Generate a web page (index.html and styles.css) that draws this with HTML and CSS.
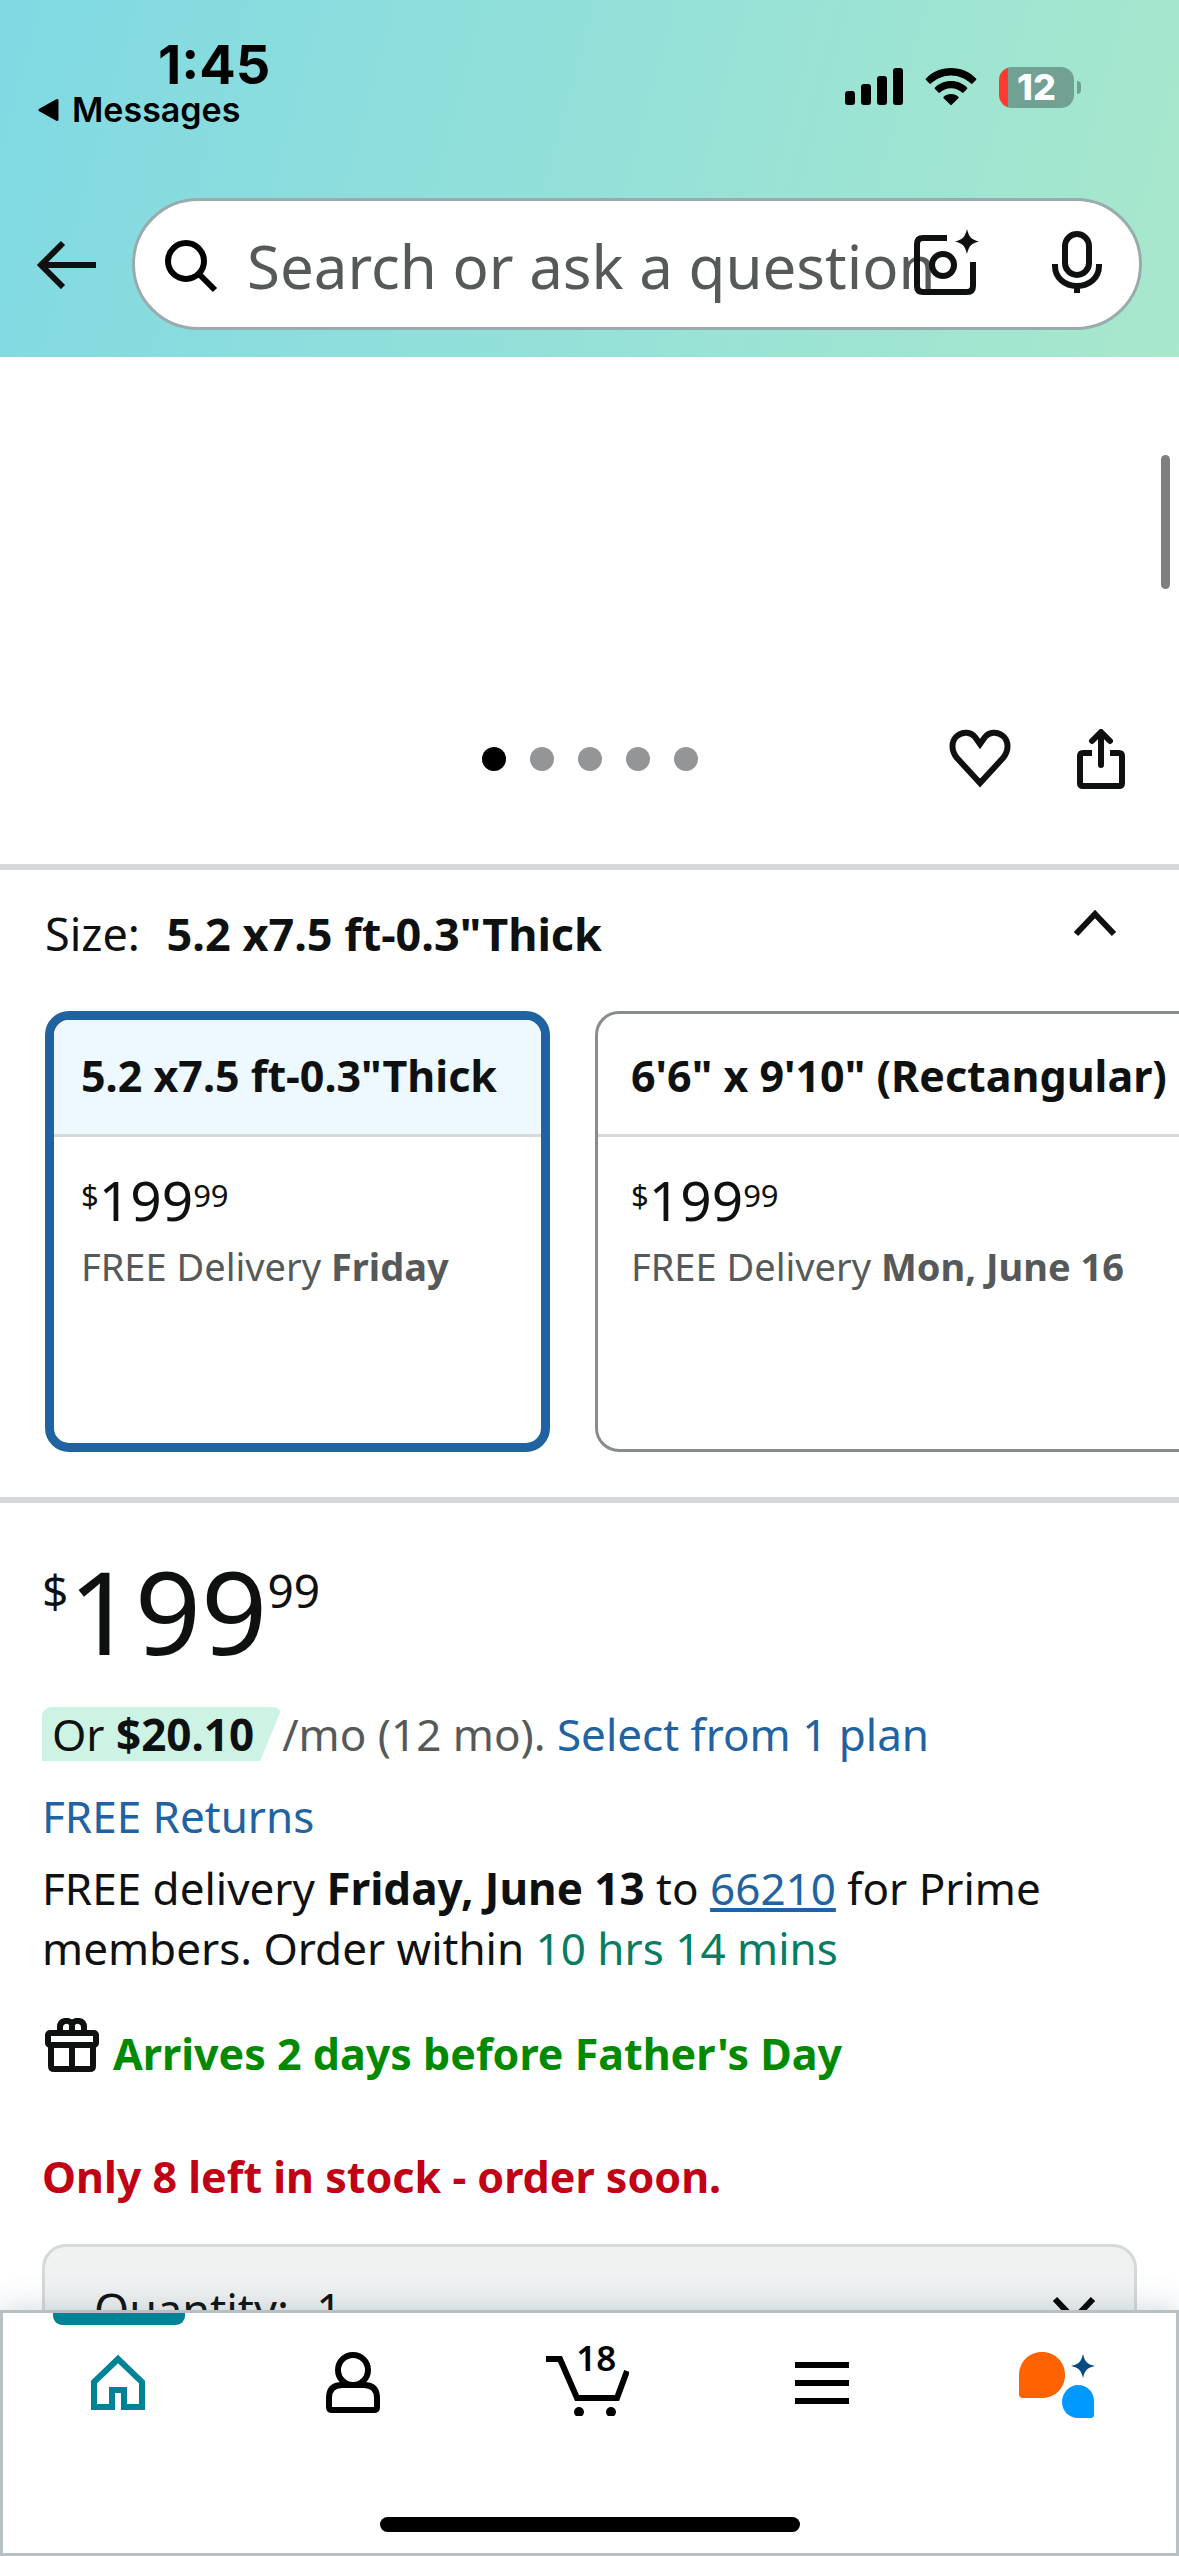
FILE: index.html
```
<!DOCTYPE html>
<html lang="en">
<head>
    <meta charset="UTF-8">
    <meta name="viewport" content="width=device-width, initial-scale=1.0">
    <title>Product</title>
    <link rel="stylesheet" href="styles.css">
</head>
<body>
    <header>
        <div class="status">
            <div class="status-left">
                <div class="time">1:45</div>
                <a class="back-app" href="#">
                    <svg width="22" height="24" viewBox="0 0 22 24"><path d="M19 2.500v19L2 12z" stroke="#000" stroke-width="3" stroke-linejoin="round"/></svg>
                    Messages
                </a>
            </div>
            <div class="status-right">
                <svg width="58" height="38" viewBox="0 0 58 38">
                    <rect x="0" y="23" width="10" height="14" rx="3"/>
                    <rect x="16" y="16" width="10" height="21" rx="3"/>
                    <rect x="32" y="8" width="10" height="29" rx="3"/>
                    <rect x="48" y="0" width="10" height="37" rx="3"/>
                </svg>
                <svg width="52" height="38" viewBox="0 0 52 38">
                    <path d="M26 0C36 0 45 4 51 10.500a1 1 0 0 1 0 1.500l-3.500 3.500a1 1 0 0 1-1.500 0C40.500 10.500 33.500 7.500 26 7.500S11.500 10.500 6 15.500a1 1 0 0 1-1.500 0L1 12a1 1 0 0 1 0-1.500C7 4 16 0 26 0z"/>
                    <path d="M26 13c6.500 0 12 2.500 16 6.500a1 1 0 0 1 0 1.500l-3.500 3.500a1 1 0 0 1-1.500 0c-3-2.500-6.500-4.200-11-4.200s-8 1.700-11 4.200a1 1 0 0 1-1.500 0L10 21a1 1 0 0 1 0-1.500C14 15.500 19.500 13 26 13z"/>
                    <path d="M26 26c3 0 5.500 1 7.300 2.700a1 1 0 0 1 0 1.500L26.700 36.800a1 1 0 0 1-1.400 0L18.700 30.200a1 1 0 0 1 0-1.500C20.500 27 23 26 26 26z"/>
                </svg>
                <div class="battery"><span>12</span></div>
            </div>
        </div>
        <div class="search-row">
            <button class="icon-btn" aria-label="Back">
                <svg width="60" height="50" viewBox="0 0 60 50" fill="none" stroke="#0f1111" stroke-width="6"><path d="M27 4L5 26l22 22M5 26h55"/></svg>
            </button>
            <form class="search">
                <svg class="magnifier" width="54" height="54" viewBox="0 0 54 54" fill="none" stroke="#000" stroke-width="6"><circle cx="22" cy="22" r="18"/><path d="M34.500 34.500L51 51"/></svg>
                <input type="text" placeholder="Search or ask a question" aria-label="Search">
                <div class="search-tools">
                    <button class="icon-btn" type="button" aria-label="Search by photo">
                        <svg width="66" height="66" viewBox="0 0 66 66" fill="none" stroke="#0f1111" stroke-width="6">
                            <path d="M33 9H9Q3 9 3 15v42q0 6 6 6h44q6 0 6-6V33"/>
                            <circle cx="29" cy="36" r="11"/>
                            <path d="M53 0c2 8 4 10.500 12 12.500-8 2-10 4.500-12 12.500-2-8-4-10.500-12-12.500 8-2 10-4.500 12-12.500z" fill="#0f1111" stroke="none"/>
                        </svg>
                    </button>
                    <button class="icon-btn" type="button" aria-label="Voice search">
                        <svg width="50" height="62" viewBox="0 0 50 62" fill="none" stroke="#0f1111" stroke-width="6">
                            <rect x="13" y="3" width="24" height="41" rx="12"/>
                            <path d="M3 33v2c0 12 10 20 22 20s22-8 22-20v-2M25 54v8"/>
                        </svg>
                    </button>
                </div>
            </form>
        </div>
    </header>

    <main>
        <section class="gallery">
            <div class="dots">
                <i class="active"></i><i></i><i></i><i></i><i></i>
            </div>
            <div class="actions">
                <button class="icon-btn" aria-label="Add to list">
                    <svg width="62" height="60" viewBox="0 0 62 60" fill="none" stroke="#0f1111" stroke-width="6"><path d="M31 54L8 29C2 22 2 12 8 7c6-5 14-4 18 1l5 7 5-7c4-5 12-6 18-1 6 5 6 15 0 22z"/></svg>
                </button>
                <button class="icon-btn" aria-label="Share">
                    <svg width="48" height="60" viewBox="0 0 48 60" fill="none" stroke="#0f1111" stroke-width="6">
                        <path d="M15 24H6q-3 0-3 3v27q0 3 3 3h36q3 0 3-3V27q0-3-3-3h-9"/>
                        <path d="M24 36V4M15 12l9-9 9 9" stroke-linecap="round" stroke-linejoin="round"/>
                    </svg>
                </button>
            </div>
            <div class="scrollbar"></div>
        </section>

        <section class="sizes">
            <div class="size-head">
                <p>Size: <b>5.2 x7.5 ft-0.3"Thick</b></p>
                <button class="icon-btn" aria-label="Collapse">
                    <svg width="44" height="28" viewBox="0 0 44 28" fill="none" stroke="#0f1111" stroke-width="6"><path d="M3 25L22 5l19 20"/></svg>
                </button>
            </div>
            <div class="size-list">
                <button class="size-card selected" aria-pressed="true">
                    <span class="size-name">5.2 x7.5 ft-0.3"Thick</span>
                    <span class="size-body">
                        <span class="price"><sup>$</sup>199<sup>99</sup></span>
                        <span>FREE Delivery <b>Friday</b></span>
                    </span>
                </button>
                <button class="size-card" aria-pressed="false">
                    <span class="size-name">6'6" x 9'10" (Rectangular)</span>
                    <span class="size-body">
                        <span class="price"><sup>$</sup>199<sup>99</sup></span>
                        <span>FREE Delivery <b>Mon, June 16</b></span>
                    </span>
                </button>
            </div>
        </section>

        <section class="buy">
            <div class="price big"><sup>$</sup>199<sup>99</sup></div>
            <p class="plan"><span class="badge">Or <b>$20.10</b></span><span>/mo (12 mo). <a href="#">Select from 1 plan</a></span></p>
            <p class="returns"><a href="#">FREE Returns</a></p>
            <p>FREE delivery <b>Friday, June 13</b> to <a class="zip" href="#">66210</a> for Prime members. Order within <span class="countdown">10 hrs 14 mins</span></p>
            <p class="arrives">
                <svg width="54" height="54" viewBox="0 0 54 54" fill="none" stroke="#0f1111" stroke-width="6">
                    <rect x="3" y="15" width="48" height="12" rx="2"/>
                    <path d="M6 27v21q0 3 3 3h36q3 0 3-3V27M27 27v24M15 13V9c0-7 9-8 12-3v7M39 13V9c0-7-9-8-12-3"/>
                </svg>
                <b>Arrives 2 days before Father's Day</b>
            </p>
            <p class="stock"><b>Only 8 left in stock - order soon.</b></p>
            <div class="quantity">
                <label for="qty">Quantity:</label>
                <select id="qty"><option>1</option><option>2</option><option>3</option></select>
                <svg width="44" height="28" viewBox="0 0 44 28" fill="none" stroke="#000" stroke-width="6"><path d="M3 3l19 20L41 3"/></svg>
            </div>
        </section>
    </main>

    <nav>
        <div class="tabs">
            <a class="tab current" href="#" aria-label="Home">
                <svg width="54" height="62" viewBox="0 0 54 62" fill="none" stroke="#008296" stroke-width="6"><path d="M3 55V30L27 7l24 23v25H33V38H21v17z"/></svg>
            </a>
            <a class="tab" href="#" aria-label="Account">
                <svg width="54" height="62" viewBox="0 0 54 62" fill="none" stroke="#000" stroke-width="6">
                    <ellipse cx="27" cy="18" rx="15" ry="15"/>
                    <path d="M16 33h22q13 0 13 13v9q0 3-3 3H6q-3 0-3-3v-9q0-13 13-13z"/>
                </svg>
            </a>
            <a class="tab" href="#" aria-label="Cart">
                <svg width="84" height="64" viewBox="0 0 84 64" fill="none" stroke="#000" stroke-width="6">
                    <path d="M1 7h14l17 39h40l10-27"/>
                    <circle cx="34" cy="60" r="5" fill="#000" stroke="none"/>
                    <circle cx="66" cy="60" r="5" fill="#000" stroke="none"/>
                </svg>
                <span class="count">18</span>
            </a>
            <a class="tab" href="#" aria-label="Menu">
                <svg width="54" height="62" viewBox="0 0 54 62" stroke="#000" stroke-width="6"><path d="M0 13h54M0 31h54M0 49h54"/></svg>
            </a>
            <a class="tab" href="#" aria-label="Assistant">
                <svg width="76" height="66" viewBox="0 0 76 66">
                    <path d="M23 0c13 0 23 10 23 23S36 46 23 46H4q-4 0-4-4V23C0 10 10 0 23 0z" fill="#ff6200"/>
                    <path d="M59 33c9 0 16 7 16 16v14q0 3-3 3H59c-9 0-16-7-16-16s7-17 16-17z" fill="#0099ff"/>
                    <path d="M64 2c2 8 4 10 12 12-8 2-10 4-12 12-2-8-4-10-12-12 8-2 10-4 12-12z" fill="#064a80"/>
                </svg>
            </a>
        </div>
        <div class="home-bar"></div>
    </nav>
</body>
</html>
```
FILE: styles.css
```
* {
    box-sizing: border-box;
}
body {
    margin: 0;
    height: 100vh;
    display: flex;
    flex-direction: column;
    background-color: #fff;
    color: #0f1111;
    font-family: "Noto Sans", "Open Sans", sans-serif;
    font-size: 44px;
    line-height: 60px;
}
p {
    margin: 0;
}
a {
    color: #2162a1;
    text-decoration: none;
}
svg {
    display: block;
    flex: none;
}
button, input, select {
    font: inherit;
    color: inherit;
}
.icon-btn {
    padding: 0;
    border: none;
    background: none;
    cursor: pointer;
}

/* Header */
header {
    flex: none;
    padding-bottom: 27px;
    background: linear-gradient(105deg, #80d9e3, #93e0d9 48%, #a8e8cc);
}
.status {
    display: flex;
    justify-content: space-between;
    height: 198px;
    padding: 36px 105px 0 38px;
    color: #000;
    font-family: Inter, sans-serif;
}
.time {
    padding-left: 120px;
    font-size: 54px;
    font-weight: 700;
    line-height: 58px;
}
.back-app {
    display: flex;
    align-items: center;
    gap: 12px;
    color: #000;
    font-size: 34px;
    font-weight: 600;
    line-height: 32px;
}
.status-right {
    display: flex;
    align-items: center;
    gap: 22px;
    height: 104px;
    margin-top: -1px;
}
.battery {
    position: relative;
    width: 75px;
    height: 41px;
    border-radius: 13px;
    background: linear-gradient(90deg, #ff3b30 9px, #72a092 9px);
    color: #fff;
    font-size: 36px;
    font-weight: 800;
    line-height: 41px;
    text-align: center;
}
.battery::after {
    content: "";
    position: absolute;
    right: -7px;
    top: 14px;
    width: 4px;
    height: 13px;
    border-radius: 0 4px 4px 0;
    background-color: #72a092;
}
.search-row {
    display: flex;
    align-items: center;
    gap: 36px;
    padding: 0 37px 0 36px;
}
.search {
    position: relative;
    flex: 1;
}
.search input {
    display: block;
    width: 100%;
    height: 132px;
    padding: 4px 20px 0 112px;
    border: 3px solid #9aabad;
    border-radius: 66px;
    background-color: #fff;
    font-size: 60px;
}
.search input::placeholder {
    color: #565959;
    opacity: 1;
}
.magnifier {
    position: absolute;
    left: 32px;
    top: 41px;
}
.search-tools {
    position: absolute;
    right: 40px;
    top: 31px;
    display: flex;
    align-items: center;
    gap: 72px;
}

/* Page */
main {
    flex: 1;
    min-height: 0;
    overflow: hidden;
}
.gallery {
    position: relative;
    display: flex;
    align-items: flex-end;
    justify-content: center;
    height: 507px;
    padding-bottom: 93px;
}
.dots {
    display: flex;
    gap: 24px;
}
.dots i {
    width: 24px;
    height: 24px;
    border-radius: 50%;
    background-color: #949597;
}
.dots .active {
    background-color: #000;
}
.actions {
    position: absolute;
    right: 54px;
    bottom: 75px;
    display: flex;
    gap: 66px;
}
.scrollbar {
    position: absolute;
    right: 9px;
    top: 98px;
    width: 9px;
    height: 134px;
    border-radius: 5px;
    background-color: #7f7f7f;
}
.sizes {
    padding: 34px 0 45px 45px;
    border-top: 6px solid #d5d9d9;
    border-bottom: 6px solid #d5d9d9;
}
.size-head {
    display: flex;
    align-items: flex-start;
    justify-content: space-between;
    padding-right: 62px;
    font-size: 45px;
}
.size-head .icon-btn {
    padding-top: 5px;
}
.size-head b {
    padding-left: 15px;
}
.size-list {
    display: flex;
    gap: 45px;
    margin-top: 47px;
    overflow: hidden;
}
.size-card {
    flex: none;
    display: flex;
    flex-direction: column;
    min-width: 505px;
    height: 441px;
    padding: 0;
    overflow: hidden;
    border: 3px solid #888c8c;
    border-radius: 24px;
    background-color: #fff;
    text-align: left;
    white-space: nowrap;
    cursor: pointer;
}
.size-name {
    width: 100%;
    padding: 32px 33px 28px;
    border-bottom: 3px solid #d5d9d9;
    font-size: 43px;
    font-weight: 700;
}
.size-body {
    display: flex;
    flex-direction: column;
    gap: 3px;
    padding: 30px 33px;
    color: #565959;
    font-size: 38px;
}
.selected {
    border: 9px solid #2162a1;
}
.selected .size-name {
    padding: 26px 27px 28px;
    background-color: #edf8ff;
}
.selected .size-body {
    padding: 30px 27px;
}
.price {
    display: flex;
    color: #0f1111;
    font-size: 55px;
    line-height: 66px;
}
.price sup {
    font-size: 31px;
    line-height: 56px;
}
.big {
    font-size: 116px;
    line-height: 120px;
}
.big sup {
    font-size: 46px;
    line-height: 80px;
}
.buy {
    padding: 47px 42px 0;
}
.plan {
    display: flex;
    align-items: center;
    margin-top: 34px;
    color: #565959;
}
.badge {
    padding: 0 28px 0 10px;
    border-radius: 9px 9px 0 0;
    background-color: #cdf3e4;
    color: #0f1111;
    line-height: 54px;
    clip-path: polygon(0 0, 100% 0, calc(100% - 22px) 100%, 0 100%);
}
.returns {
    margin: 22px 0 12px;
}
.zip {
    text-decoration: underline;
}
.countdown {
    color: #067d62;
}
.arrives {
    display: flex;
    align-items: flex-end;
    gap: 14px;
    margin-top: 40px;
    padding-left: 3px;
    color: #008a00;
    font-size: 43px;
}
.arrives svg {
    margin-bottom: 12px;
}
.stock {
    margin-top: 63px;
    color: #c10015;
    font-size: 43px;
}
.quantity {
    display: flex;
    align-items: center;
    gap: 27px;
    height: 132px;
    margin-top: 37px;
    padding: 0 38px 0 49px;
    border: 3px solid #d5d9d9;
    border-radius: 24px;
    background-color: #f0f2f2;
    font-size: 45px;
}
.quantity select {
    flex: 1;
    padding: 0;
    border: none;
    background: none;
    appearance: none;
}

/* Bottom bar */
nav {
    position: relative;
    flex: none;
    height: 246px;
    border: 3px solid #b8c0c4;
    background-color: #fff;
    box-shadow: 0 0 30px rgba(60, 90, 110, 0.25);
}
.tabs {
    display: grid;
    grid-template-columns: repeat(5, 1fr);
    margin: 0 2px 0 -2px;
}
.tab {
    position: relative;
    display: flex;
    justify-content: center;
    height: 142px;
    padding-top: 39px;
}
.current::before {
    content: "";
    position: absolute;
    left: 52px;
    top: 0;
    width: 132px;
    height: 12px;
    border-radius: 0 0 9px 9px;
    background-color: #008296;
}
.count {
    position: absolute;
    left: 106px;
    top: 22px;
    color: #000;
    font-size: 35px;
    font-weight: 600;
    line-height: 45px;
}
.home-bar {
    width: 420px;
    height: 15px;
    margin: 62px auto 0;
    border-radius: 8px;
    background-color: #000;
}
```
